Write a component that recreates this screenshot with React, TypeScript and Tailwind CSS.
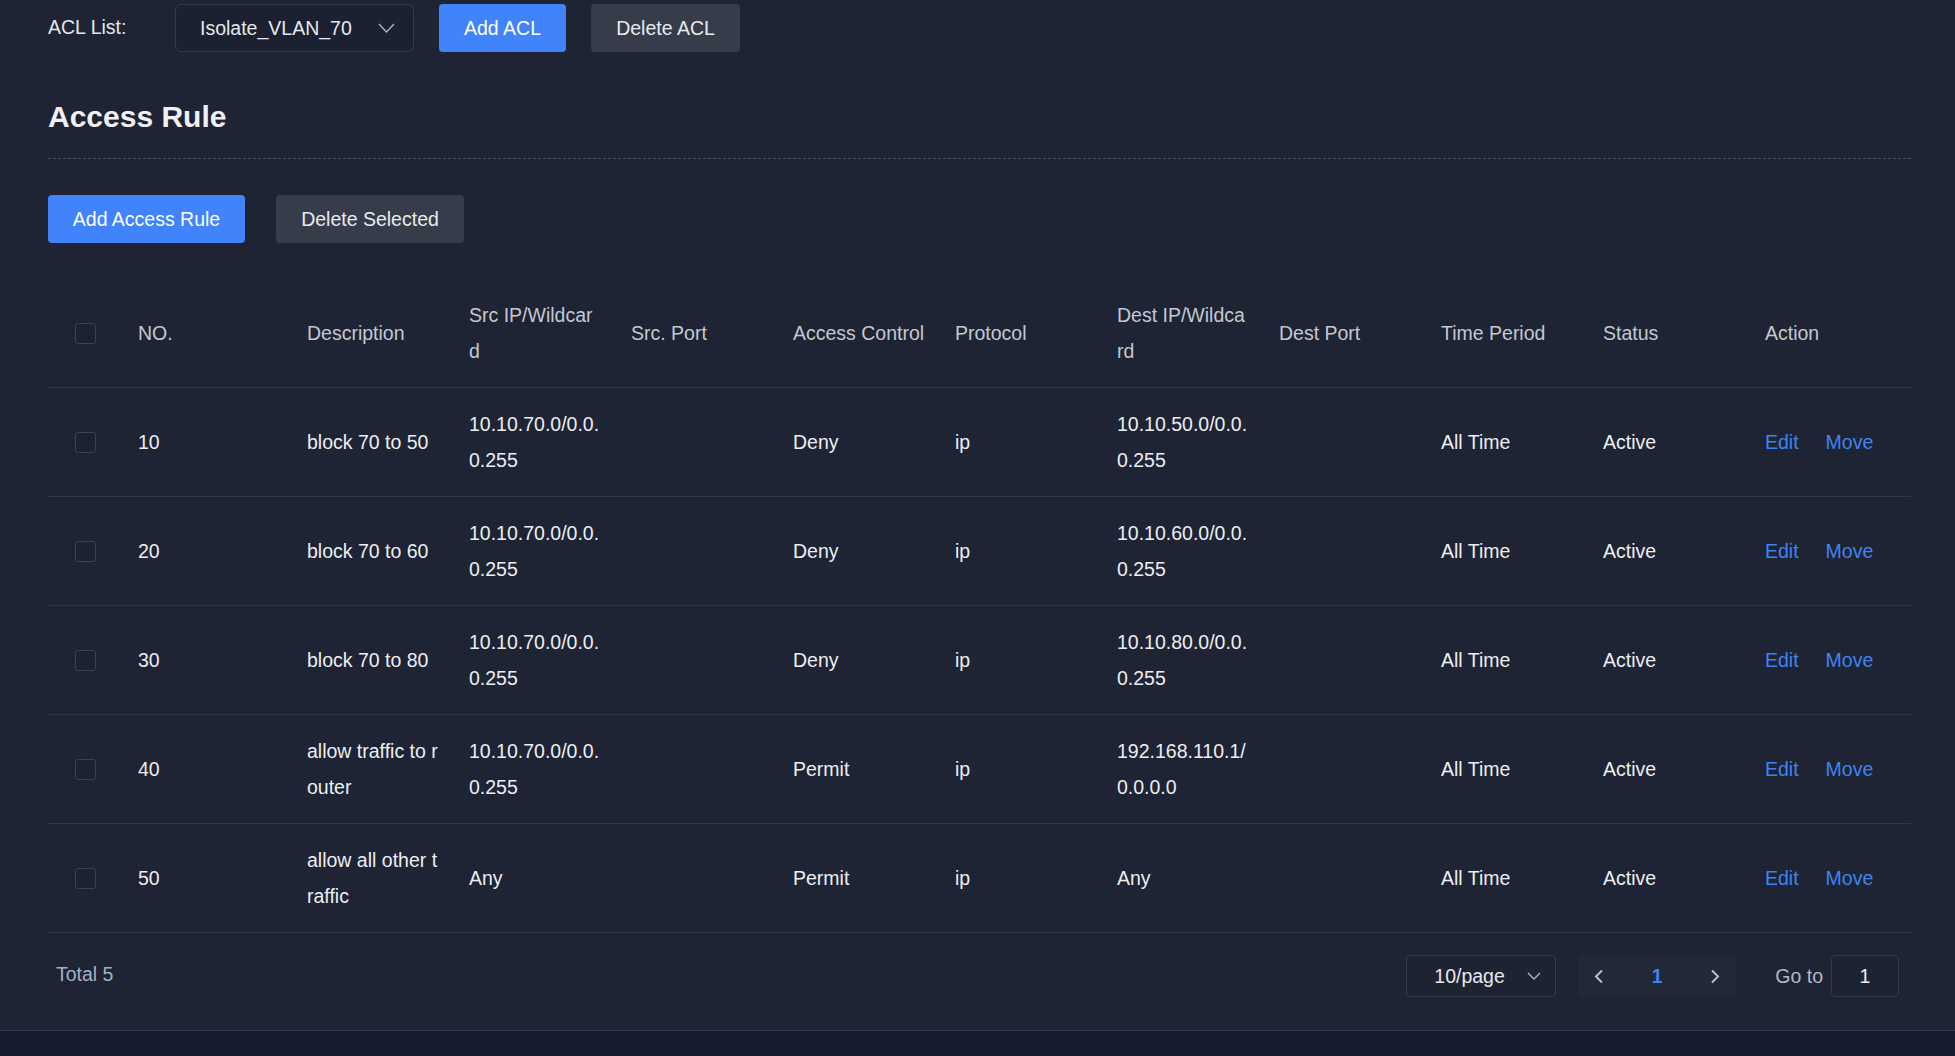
import React from "react";

type Rule = {
  no: string;
  desc: string[];
  src: string[];
  srcPort: string;
  access: string;
  protocol: string;
  dest: string[];
  destPort: string;
  time: string;
  status: string;
};

const rules: Rule[] = [
  { no: "10", desc: ["block 70 to 50"], src: ["10.10.70.0/0.0.", "0.255"], srcPort: "", access: "Deny", protocol: "ip", dest: ["10.10.50.0/0.0.", "0.255"], destPort: "", time: "All Time", status: "Active" },
  { no: "20", desc: ["block 70 to 60"], src: ["10.10.70.0/0.0.", "0.255"], srcPort: "", access: "Deny", protocol: "ip", dest: ["10.10.60.0/0.0.", "0.255"], destPort: "", time: "All Time", status: "Active" },
  { no: "30", desc: ["block 70 to 80"], src: ["10.10.70.0/0.0.", "0.255"], srcPort: "", access: "Deny", protocol: "ip", dest: ["10.10.80.0/0.0.", "0.255"], destPort: "", time: "All Time", status: "Active" },
  { no: "40", desc: ["allow traffic to r", "outer"], src: ["10.10.70.0/0.0.", "0.255"], srcPort: "", access: "Permit", protocol: "ip", dest: ["192.168.110.1/", "0.0.0.0"], destPort: "", time: "All Time", status: "Active" },
  { no: "50", desc: ["allow all other t", "raffic"], src: ["Any"], srcPort: "", access: "Permit", protocol: "ip", dest: ["Any"], destPort: "", time: "All Time", status: "Active" },
];

const cols = "grid grid-cols-[74px_169px_repeat(10,minmax(0,1fr))]";

function Chevron({ w, h }: { w: number; h: number }) {
  return (
    <svg width={w} height={h} viewBox={`0 0 ${w} ${h}`} fill="none">
      <polyline points={`1,1 ${w / 2},${h - 1} ${w - 1},1`} stroke="#a9b1c1" strokeWidth="1.4" />
    </svg>
  );
}

function Checkbox() {
  return <div className="w-[21px] h-[21px] rounded-[3px] border border-[#3a4253] bg-[#1c2231]"></div>;
}

function Lines({ lines }: { lines: string[] }) {
  return (
    <div className="flex flex-col">
      {lines.map((l, i) => (
        <span key={i} className="whitespace-nowrap">
          {l}
        </span>
      ))}
    </div>
  );
}

function App() {
  const headers: string[][] = [
    ["NO."],
    ["Description"],
    ["Src IP/Wildcar", "d"],
    ["Src. Port"],
    ["Access Control"],
    ["Protocol"],
    ["Dest IP/Wildca", "rd"],
    ["Dest Port"],
    ["Time Period"],
    ["Status"],
    ["Action"],
  ];

  return (
    <div className="min-h-screen bg-[#141c2d] font-['Liberation_Sans',Arial,sans-serif] text-[19.5px] leading-[36px]">
      <div className="bg-[#1e2433] border-b border-[#343c4d] pl-12 pr-[44px] pt-1">
        {/* ACL selector bar */}
        <div className="flex items-center h-12">
          <span className="text-[#e3e6eb] w-[127px] -mt-0.5">ACL List:</span>
          <div className="flex items-center justify-between w-[239px] h-12 pl-6 pr-[18px] rounded-md border border-[#343b4b] bg-[#1b2130] text-[#e6e8ec]">
            <span>Isolate_VLAN_70</span>
            <Chevron w={17} h={10} />
          </div>
          <button className="ml-[25px] w-[127px] h-12 rounded bg-[#4083fb] text-white">Add ACL</button>
          <button className="ml-[25px] w-[149px] h-12 rounded bg-[#363c49] text-[#e8eaee]">Delete ACL</button>
        </div>

        {/* Heading */}
        <h1 className="mt-[47px] text-[30px] leading-[36px] font-bold text-[#f0f1f4]">Access Rule</h1>
        <div className="mt-[23px] border-t border-dashed border-[#4a5264]"></div>

        <div className="flex items-center gap-[31px] mt-9">
          <button className="w-[197px] h-12 rounded bg-[#4083fb] text-white">Add Access Rule</button>
          <button className="w-[188px] h-12 rounded bg-[#363c49] text-[#e8eaee]">Delete Selected</button>
        </div>

        {/* Table */}
        <div className="mt-9">
          <div className={`${cols} h-[109px] items-center border-b border-[#2f3748] text-[#c3c8d1]`}>
            <div className="flex justify-center">
              <Checkbox />
            </div>
            {headers.map((h, i) => (
              <div key={i} className="px-4">
                <Lines lines={h} />
              </div>
            ))}
          </div>
          {rules.map((r) => (
            <div key={r.no} className={`${cols} h-[109px] items-center border-b border-[#2f3748] text-[#eceef2]`}>
              <div className="flex justify-center">
                <Checkbox />
              </div>
              <div className="px-4">{r.no}</div>
              <div className="px-4">
                <Lines lines={r.desc} />
              </div>
              <div className="px-4">
                <Lines lines={r.src} />
              </div>
              <div className="px-4">{r.srcPort}</div>
              <div className="px-4">{r.access}</div>
              <div className="px-4">{r.protocol}</div>
              <div className="px-4">
                <Lines lines={r.dest} />
              </div>
              <div className="px-4">{r.destPort}</div>
              <div className="px-4">{r.time}</div>
              <div className="px-4">{r.status}</div>
              <div className="px-4 flex gap-[27px] text-[#3f83f2]">
                <span>Edit</span>
                <span>Move</span>
              </div>
            </div>
          ))}
        </div>

        {/* Footer / pagination */}
        <div className="flex items-center justify-between h-[44px] mt-[21px] mb-[32px]">
          <span className="pl-2 -mt-1 text-[#a6b0c3]">Total 5</span>
          <div className="flex items-center pr-3">
            <div className="flex items-center justify-between w-[150px] h-[42px] pl-[27px] pr-[14px] rounded border border-[#343b4b] bg-[#1d2331] text-[#e6e8ec]">
              <span>10/page</span>
              <Chevron w={14} h={8} />
            </div>
            <div className="ml-[22px] flex items-center justify-between w-[158px] h-[42px] px-4 rounded bg-[#212837]">
              <svg width="10" height="15" viewBox="0 0 10 15" fill="none">
                <polyline points="8,1.5 2,7.5 8,13.5" stroke="#b8c0d0" strokeWidth="2" />
              </svg>
              <span className="font-bold text-[#3f83f2]">1</span>
              <svg width="10" height="15" viewBox="0 0 10 15" fill="none">
                <polyline points="2,1.5 8,7.5 2,13.5" stroke="#b8c0d0" strokeWidth="2" />
              </svg>
            </div>
            <span className="ml-[39px] text-[#b0b9ca]">Go to</span>
            <div className="ml-2 flex items-center justify-center w-[68px] h-[42px] rounded border border-[#343b4b] bg-[#1d2331] text-[#eceef2]">
              1
            </div>
          </div>
        </div>
      </div>
    </div>
  );
}

export default App;
